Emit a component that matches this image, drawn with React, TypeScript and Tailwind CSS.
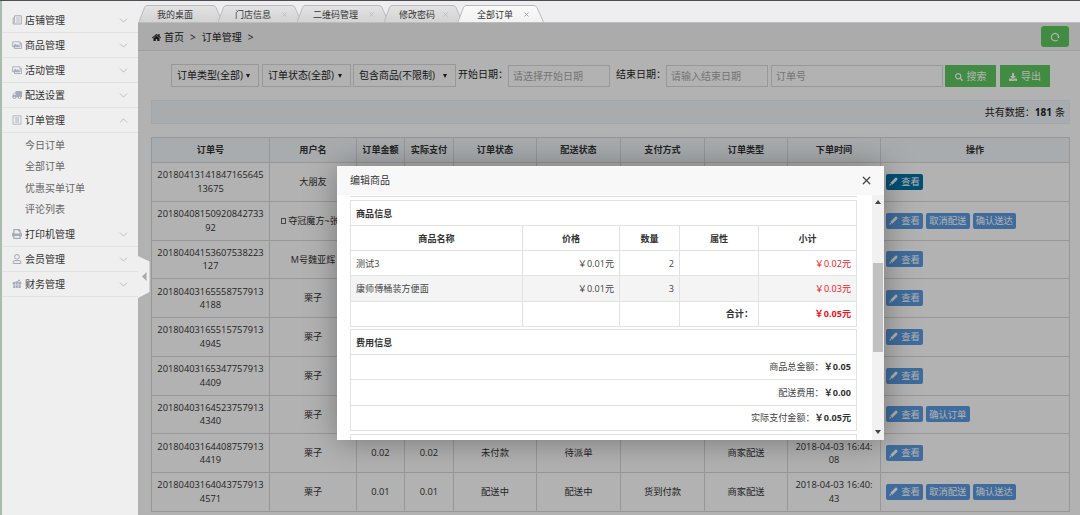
import { ReactNode } from "react";
import clsx from "clsx";
import { ChevronDown, ChevronUp, X } from "lucide-react";
import { FaDownload, FaHome, FaPrint, FaRegUser, FaSearch, FaTruck } from "react-icons/fa";

interface MenuItem {
  label: string;
  icon: ReactNode;
  children?: string[];
}

interface Order {
  no: [string, string];
  user: string;
  amount: string;
  paid: string;
  status: string;
  delivery: string;
  payType: string;
  type: string;
  time: [string, string];
  actions: string[];
  active?: boolean;
}

const NewsIcon = () => (
  <svg width="10" height="10" viewBox="0 0 10 10" fill="none" stroke="currentColor">
    <path d="M2.5 .8 H9.3 V9 H1.2 V3 H2.5 Z" />
    <path d="M2.6 3 V8.5 M4.2 3 H7.8 M4.2 5 H7.8 M4.2 7 H7.8" strokeWidth=".8" />
  </svg>
);

const ListIcon = () => (
  <svg width="10" height="10" viewBox="0 0 10 10" fill="none" stroke="currentColor">
    <path d="M1 .8 H9 V9.2 H1 Z" strokeWidth=".8" />
    <path d="M3 3 H7 M3 5 H7 M3 7 H7" strokeWidth=".9" />
  </svg>
);

const PictureIcon = () => (
  <svg width="10" height="10" viewBox="0 0 10 10" fill="none" stroke="currentColor">
    <path d="M.6 1.8 H8 V6.8 H.6 Z M8 3.2 H9.5 V8.5 H2.5 V6.8" strokeWidth=".9" />
    <path d="M1 6.4 L3.2 4 L4.8 5.2 L6 4.6 L7.6 6.4 Z" fill="currentColor" strokeWidth=".4" />
  </svg>
);

const GiftIcon = () => (
  <svg width="10" height="10" viewBox="0 0 10 10" fill="currentColor">
    <path d="M.6 3.4 L5 2.2 L9.4 3.4 V5 H8.7 V9 H1.3 V5 H.6 Z" />
    <path d="M5 3 L7.2 .8 L8.2 2.6" fill="none" stroke="currentColor" />
    <path d="M3.6 3.4 V9 M6.2 3.4 V9 M1.3 6 H8.7" stroke="#efefef" strokeWidth=".6" />
  </svg>
);

const PencilIcon = () => (
  <svg width="9" height="9" viewBox="0 0 9 9" fill="currentColor">
    <path d="M.4 8.7 L1 6.4 L2.7 8.1 Z" />
    <path d="M1.4 5.8 L6.4 .8 Q7 .2 7.6 .8 L8.3 1.5 Q8.8 2.1 8.3 2.7 L3.3 7.7 Z" />
  </svg>
);

const RefreshIcon = () => (
  <svg width="10" height="10" viewBox="0 0 10 10">
    <path d="M7.6 7.8 A3.7 3.7 0 1 1 8.7 4.6" fill="none" stroke="currentColor" strokeWidth="1.1" />
    <path d="M6.8 4.4 H10 L8.5 6.6 Z" fill="currentColor" />
  </svg>
);

const menu: MenuItem[] = [
  { label: "店铺管理", icon: <NewsIcon /> },
  { label: "商品管理", icon: <PictureIcon /> },
  { label: "活动管理", icon: <PictureIcon /> },
  { label: "配送设置", icon: <FaTruck className="-scale-x-100" /> },
  {
    label: "订单管理",
    icon: <ListIcon />,
    children: ["今日订单", "全部订单", "优惠买单订单", "评论列表"],
  },
  { label: "打印机管理", icon: <FaPrint /> },
  { label: "会员管理", icon: <FaRegUser /> },
  { label: "财务管理", icon: <GiftIcon /> },
];

const tabs = [
  { label: "我的桌面", width: 84, pad: "pl-[18px]", closable: false },
  { label: "门店信息", width: 84, pad: "pl-[17px]", closable: true },
  { label: "二维码管理", width: 92, pad: "pl-4", closable: true },
  { label: "修改密码", width: 79, pad: "pl-[15px]", closable: true },
  { label: "全部订单", width: 86, pad: "pl-[19px]", closable: true, active: true },
];

const headers = [
  "订单号",
  "用户名",
  "订单金额",
  "实际支付",
  "订单状态",
  "配送状态",
  "支付方式",
  "订单类型",
  "下单时间",
  "操作",
];

const base = {
  user: "栗子",
  amount: "0.01",
  paid: "0.01",
  status: "配送中",
  delivery: "配送中",
  payType: "货到付款",
  type: "商家配送",
};

const orders: Order[] = [
  { ...base, no: ["20180413141847165645", "13675"], user: "大朋友", time: ["2018-04-13 14:18:", "47"], actions: [], active: true },
  { ...base, no: ["20180408150920842733", "92"], user: "夺冠魔方~张", time: ["2018-04-08 15:09:", "20"], actions: ["取消配送", "确认送达"] },
  { ...base, no: ["20180404153607538223", "127"], user: "M号魏亚辉", time: ["2018-04-04 15:36:", "07"], actions: [] },
  { ...base, no: ["20180403165558757913", "4188"], time: ["2018-04-03 16:55:", "58"], actions: [] },
  { ...base, no: ["20180403165515757913", "4945"], time: ["2018-04-03 16:55:", "15"], actions: [] },
  { ...base, no: ["20180403165347757913", "4409"], time: ["2018-04-03 16:53:", "47"], actions: [] },
  { ...base, no: ["20180403164523757913", "4340"], time: ["2018-04-03 16:45:", "23"], actions: ["确认订单"] },
  { ...base, no: ["20180403164408757913", "4419"], amount: "0.02", paid: "0.02", status: "未付款", delivery: "待派单", payType: "", time: ["2018-04-03 16:44:", "08"], actions: [] },
  { ...base, no: ["20180403164043757913", "4571"], time: ["2018-04-03 16:40:", "43"], actions: ["取消配送", "确认送达"] },
];

const orderCols =
  "grid grid-cols-[118px_87px_48px_49px_83px_84px_84px_83px_93px_189px]";
const goodsCols = "grid grid-cols-[172px_97px_60px_79px_98px]";
const cell = "flex items-center justify-center border-r border-[#d9d9d9]";

const Sidebar = () => (
  <aside className="w-[138px] shrink-0 border-l-2 border-[#a9bcae] bg-[#efefef] pt-[7px]">
    {menu.map((item) => (
      <div key={item.label}>
        <div className="flex h-[25px] items-center border-b border-[#e2e2e2] pl-[10px] pr-[10px] text-[10px] text-[#333]">
          <span className="mr-[3px] w-[10px] text-[10px] text-[#a3abba]">
            {item.icon}
          </span>
          <span className="flex-1 whitespace-nowrap">{item.label}</span>
          {item.children ? (
            <ChevronUp size={13} strokeWidth={1.8} className="-mr-[2px] text-[#bbb]" />
          ) : (
            <ChevronDown size={13} strokeWidth={1.8} className="-mr-[2px] text-[#bbb]" />
          )}
        </div>
        {item.children && (
          <ul className="pt-[2px] pb-[2px] text-[10px] text-[#666]">
            {item.children.map((child) => (
              <li key={child} className="flex h-[21.3px] items-center pl-[23px]">
                {child}
              </li>
            ))}
          </ul>
        )}
      </div>
    ))}
  </aside>
);

const TabBar = () => (
  <div className="flex h-[22px] shrink-0 items-end border-b border-[#bcbcbc] bg-[#eeeef0] pl-px">
    {tabs.map((tab, i) => (
      <div
        key={tab.label}
        className={clsx(
          "relative flex h-[17px] shrink-0 items-center pt-[2px] text-[9px] text-[#333]",
          tab.pad,
          i > 0 && "-ml-[5px]"
        )}
        style={{ width: tab.width }}
      >
        <svg
          className="absolute inset-0"
          width={tab.width}
          height={17}
          viewBox={`0 0 ${tab.width} 17`}
        >
          <defs>
            <linearGradient id={`tab${i}`} x1="0" y1="0" x2="0" y2="1">
              <stop offset="0" stopColor={tab.active ? "#fafafa" : "#e3e3e3"} />
              <stop offset="1" stopColor={tab.active ? "#f2f2f2" : "#d3d3d3"} />
            </linearGradient>
          </defs>
          <path
            d={`M0 17 L5.5 2.5 Q6.3 .5 8 .5 H${tab.width - 10} Q${tab.width - 8} .5 ${tab.width - 7} 2.5 L${tab.width - 0.5} 17`}
            fill={`url(#tab${i})`}
            stroke="#bababa"
          />
        </svg>
        <span className="relative">{tab.label}</span>
        {tab.closable && (
          <X
            size={7}
            strokeWidth={3}
            className={clsx(
              "absolute right-[14px] top-[6px]",
              tab.active ? "text-[#999]" : "text-[#bbb]"
            )}
          />
        )}
      </div>
    ))}
  </div>
);

const Select = ({ label, className }: { label: string; className: string }) => (
  <div
    className={clsx(
      "flex h-[23px] items-center justify-between border border-[#dadada] pl-[5px] pr-[8px] text-[10px]",
      className
    )}
  >
    <span className="whitespace-nowrap">{label}</span>
    <span className="h-0 w-0 border-x-2 border-t-[4px] border-x-transparent border-t-[#222]" />
  </div>
);

const Input = ({ label, className }: { label: string; className: string }) => (
  <div
    className={clsx(
      "mt-px flex h-[22px] items-center border border-[#dadada] pl-[4px] pt-px text-[10px] text-[#a8a8a8]",
      className
    )}
  >
    {label}
  </div>
);

const Filters = () => (
  <div className="mt-[13px] flex h-[23px] items-start pl-[33px] text-[#222]">
    <Select label="订单类型(全部)" className="w-[88px]" />
    <Select label="订单状态(全部)" className="ml-[3px] w-[89px]" />
    <Select label="包含商品(不限制)" className="ml-[2px] w-[103px]" />
    <span className="ml-[2px] mt-[3px] w-[50px] whitespace-nowrap text-[10px]">
      开始日期：
    </span>
    <Input label="请选择开始日期" className="w-[102px]" />
    <span className="ml-[6px] mt-[3px] w-[50px] whitespace-nowrap text-[10px]">
      结束日期：
    </span>
    <Input label="请输入结束日期" className="w-[102px]" />
    <Input label="订单号" className="ml-[3px] w-[172px]" />
    <button className="ml-[2px] mt-px flex h-[22px] w-[51px] items-center justify-center gap-1 bg-[#5fc860] pt-px text-[10px] text-white">
      <FaSearch size={8} /> 搜索
    </button>
    <button className="ml-[4px] mt-px flex h-[22px] w-[50px] items-center justify-center gap-1 bg-[#5fc860] pt-px text-[10px] text-white">
      <FaDownload size={8} /> 导出
    </button>
  </div>
);

const OrderTable = () => (
  <div className="ml-[13px] mt-[13px] w-[919px] border-l border-t border-[#d9d9d9] text-[9.3px] text-[#333]">
    <div className={clsx(orderCols, "h-[25px] border-b border-[#d9d9d9] bg-[#f2f7fa] text-[9.1px] font-bold")}>
      {headers.map((h) => (
        <div key={h} className={cell}>
          {h}
        </div>
      ))}
    </div>
    {orders.map((o) => (
      <div
        key={o.no.join("")}
        className={clsx(orderCols, "h-[38.75px] border-b border-[#d9d9d9] leading-[13.6px]")}
      >
        <div className={clsx(cell, "flex-col")}>
          <span>{o.no[0]}</span>
          <span>{o.no[1]}</span>
        </div>
        <div
          className={clsx(
            cell,
            "whitespace-nowrap text-[9.1px]",
            o.user.includes("~") && "pr-[6px]"
          )}
        >
          {o.user.includes("~") && (
            <span className="mr-[2px] h-[6px] w-[5px] border border-[#666]" />
          )}
          {o.user}
        </div>
        <div className={cell}>{o.amount}</div>
        <div className={cell}>{o.paid}</div>
        <div className={cell}>{o.status}</div>
        <div className={cell}>{o.delivery}</div>
        <div className={cell}>{o.payType}</div>
        <div className={cell}>{o.type}</div>
        <div className={clsx(cell, "flex-col")}>
          <span>{o.time[0]}</span>
          <span>{o.time[1]}</span>
        </div>
        <div className="flex items-center gap-[3px] border-r border-[#d9d9d9] pl-[5px] text-white">
          <span
            className={clsx(
              "flex h-4 w-[37px] items-center justify-center gap-[3px] rounded-[2px]",
              o.active ? "bg-[#0073a6]" : "bg-[#5b9be0]"
            )}
          >
            <PencilIcon /> 查看
          </span>
          {o.actions.map((a) => (
            <span
              key={a}
              className="flex h-4 w-[43.5px] items-center justify-center whitespace-nowrap rounded-[2px] bg-[#5b9be0]"
            >
              {a}
            </span>
          ))}
        </div>
      </div>
    ))}
  </div>
);

const goods = [
  { name: "测试3", price: "￥0.01元", count: "2", total: "￥0.02元" },
  { name: "康师傅桶装方便面", price: "￥0.01元", count: "3", total: "￥0.03元" },
];

const fees = [
  { label: "商品总金额：", value: "￥0.05" },
  { label: "配送费用：", value: "￥0.00" },
  { label: "实际支付金额：", value: "￥0.05元" },
];

const line = "border-[#e2e2e2]";
const gcell = "flex items-center border-r border-[#e2e2e2] px-[5px] pt-px";

const EditModal = () => (
  <div className="absolute left-[337px] top-[166px] flex h-[274px] w-[547px] flex-col overflow-hidden bg-white text-[9.1px] text-[#444] shadow-[1px_1px_30px_rgba(0,0,0,0.35)]">
    <div className="flex h-[29px] shrink-0 items-center justify-between bg-[#f8f8f8] pl-[13px] pr-[11px] text-[10px] text-[#333]">
      <span>编辑商品</span>
      <X size={13} strokeWidth={2.2} className="text-[#444]" />
    </div>
    <div className="flex h-[245px]">
      <div className="w-[535px] overflow-hidden pl-[13px]">
        <div className={clsx("h-[2px] w-[507px] border-b", line)} />
        <div className={clsx("mt-[3px] w-[507px] border-l border-t", line)}>
          <div className={clsx("flex h-[25px] items-center border-b border-r px-[5px] pt-px font-bold text-[#333]", line)}>
            商品信息
          </div>
          <div className={clsx(goodsCols, "h-[25.2px] border-b text-center font-bold text-[#333]", line)}>
            {["商品名称", "价格", "数量", "属性", "小计"].map((h) => (
              <div key={h} className={clsx(gcell, "justify-center")}>
                {h}
              </div>
            ))}
          </div>
          {goods.map((g, i) => (
            <div
              key={g.name}
              className={clsx(goodsCols, "h-[25.2px] border-b", line, i % 2 === 1 && "bg-[#f4f4f4]")}
            >
              <div className={gcell}>{g.name}</div>
              <div className={clsx(gcell, "justify-end")}>{g.price}</div>
              <div className={clsx(gcell, "justify-end")}>{g.count}</div>
              <div className={gcell} />
              <div className={clsx(gcell, "justify-end text-[#f0141e]")}>{g.total}</div>
            </div>
          ))}
          <div className={clsx(goodsCols, "h-[25.2px] border-b font-bold", line)}>
            <div className={gcell} />
            <div className={gcell} />
            <div className={gcell} />
            <div className={clsx(gcell, "justify-end text-[#333]")}>合计：</div>
            <div className={clsx(gcell, "justify-end text-[#f0141e]")}>￥0.05元</div>
          </div>
        </div>
        <div className={clsx("mt-[2.4px] w-[507px] border-l border-t", line)}>
          <div className={clsx("flex h-[25px] items-center border-b border-r px-[5px] pt-px font-bold text-[#333]", line)}>
            费用信息
          </div>
          {fees.map((f) => (
            <div
              key={f.label}
              className={clsx("flex h-[25.2px] items-center justify-end border-b border-r px-[5px]", line)}
            >
              {f.label}
              <b className="text-[#333]">{f.value}</b>
            </div>
          ))}
        </div>
        <div className={clsx("mt-[3px] h-4 w-[507px] border-x border-t", line)} />
      </div>
      <div className="flex w-[12px] flex-col items-center bg-[#f1f1f1]">
        <span className="mt-[5px] h-0 w-0 border-x-[3px] border-b-[4px] border-x-transparent border-b-[#444]" />
        <div className="mt-[59px] h-[89px] w-[10px] bg-[#c1c1c1]" />
        <span className="mt-[78px] h-0 w-0 border-x-[3px] border-t-[4px] border-x-transparent border-t-[#444]" />
      </div>
    </div>
  </div>
);

const App = () => {
  return (
    <div className="relative flex h-[515px] w-[1080px] flex-col overflow-hidden bg-white font-['Open_Sans','Noto_Sans_CJK_SC',sans-serif]">
      <div className="h-px shrink-0 bg-[#504d55]" />
      <div className="flex min-h-0 flex-1">
        <Sidebar />
        <main className="flex min-w-0 flex-1 flex-col">
          <TabBar />
          <section className="relative min-h-0 flex-1 overflow-hidden bg-white">
            <div className="flex h-[28px] items-center justify-between border-b border-[#e5e5e5] bg-[#f5f5f5] pl-[14px] pr-[11px] text-[10px] text-[#222]">
              <div className="flex items-center pt-px">
                <FaHome size={9} className="mr-[3px]" />
                <span>首页</span>
                <span className="mx-[6px]">&gt;</span>
                <span>订单管理</span>
                <span className="ml-[6px]">&gt;</span>
              </div>
              <button className="flex h-[21px] w-[28px] items-center justify-center rounded-[3px] bg-[#5fc860] text-white">
                <RefreshIcon />
              </button>
            </div>
            <Filters />
            <div className="ml-[13px] mt-[13px] flex h-[24px] w-[919px] items-center justify-end border border-[#eaeff2] bg-[#f2f7fa] pr-[4px] text-[10px] text-[#222]">
              共有数据：<b className="mr-[3px]">181</b>条
            </div>
            <OrderTable />
            <div className="absolute inset-0 bg-black/30" />
          </section>
        </main>
      </div>

      {/* sidebar collapse handle */}
      <svg className="absolute left-[138px] top-[256px]" width="12" height="42" viewBox="0 0 12 42">
        <path d="M0 0 L11.5 5.5 V36 L0 42 Z" fill="#efefef" />
        <path d="M8.5 16 V25 L4 20.5 Z" fill="#aaa" />
      </svg>

      <EditModal />
    </div>
  );
};

export default App;
